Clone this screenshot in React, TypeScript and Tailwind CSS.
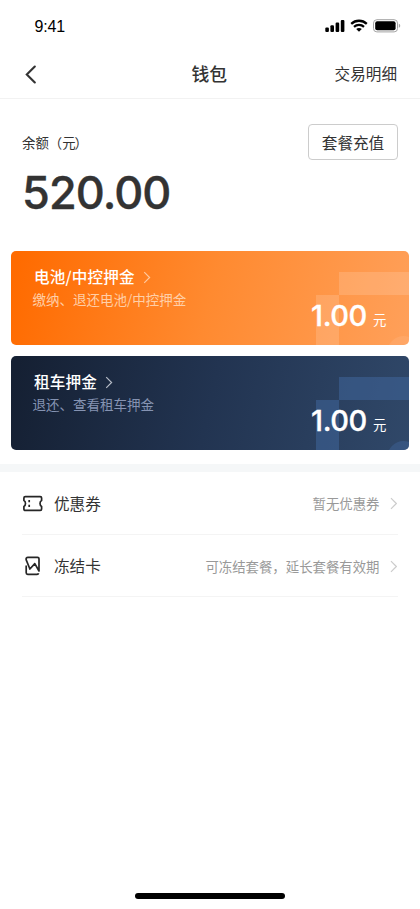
import type { ReactNode } from "react";

function StatusBar() {
  return (
    <div className="flex h-[50px] items-start justify-between pl-[34.5px] pr-[19px]">
      <span className="mt-[16px] font-['Liberation_Sans',Arial,sans-serif] text-[16px] leading-[22px] tracking-[-0.2px] text-black">
        9:41
      </span>
      <div className="mt-[19px] flex items-start">
        <svg className="h-[14px] w-[20px]" viewBox="0 0 20 14" fill="#000">
          <rect x="0.3" y="8.4" width="3.6" height="4.6" rx="1.1" />
          <rect x="5.4" y="6.2" width="3.6" height="6.8" rx="1.1" />
          <rect x="10.6" y="3.6" width="3.6" height="9.4" rx="1.1" />
          <rect x="15.8" y="1" width="3.6" height="12" rx="1.1" />
        </svg>
        <svg className="ml-[5px] h-[14px] w-[18px]" viewBox="0 0 18 14" fill="none" stroke="#000">
          <path d="M1.2 4.8C5.6.7 12.4.7 16.8 4.8" strokeWidth="2.3" />
          <path d="M4 7.9c2.8-2.6 7.2-2.6 10 0" strokeWidth="2.2" />
          <path d="M9 12.7 6.2 10c1.6-1.4 4-1.4 5.6 0Z" fill="#000" stroke="none" />
        </svg>
        <svg className="ml-[5px] h-[14px] w-[28px]" viewBox="0 0 28 14">
          <rect x="0.5" y="0.7" width="24" height="12.2" rx="3.4" fill="#fff" stroke="#a3a3a3" />
          <rect x="2.2" y="2.3" width="20.4" height="9" rx="2" fill="#000" />
          <path d="M25.8 4.8v4c.9-.3 1.4-1.1 1.4-2s-.5-1.7-1.4-2Z" fill="#a3a3a3" />
        </svg>
      </div>
    </div>
  );
}

function Chevron({ className }: { className: string }) {
  return (
    <svg className={className} viewBox="0 0 8 14" fill="none" stroke="currentColor" strokeWidth="1.3">
      <path d="m1 1.2 5.8 5.8L1 12.8" />
    </svg>
  );
}

interface DepositCardProps {
  title: string;
  note: string;
  background: string;
  noteColor: string;
  chevronColor: string;
  patternColor: string;
  circleColor: string;
}

function DepositCard({ title, note, background, noteColor, chevronColor, patternColor, circleColor }: DepositCardProps) {
  return (
    <section className={`relative h-[94px] overflow-hidden rounded-[5px] ${background}`}>
      <svg className="absolute right-0 top-0 h-[94px] w-[93px]" viewBox="0 0 93 94" fill="currentColor">
        <path className={patternColor} d="M23 21h70v23H23zM0 44h23v50H0z" />
        <circle className={circleColor} cx="87.5" cy="101" r="16" />
      </svg>
      <div className="relative flex h-full flex-col pl-[21.5px]">
        <div className="mt-[13px] flex h-[24px] items-center pl-[1.5px] text-white">
          <h2 className="text-[15.6px] font-medium leading-[24px] tracking-[0.15px]">{title}</h2>
          <Chevron className={`ml-[8.5px] mt-[2px] h-[13px] w-[8px] ${chevronColor}`} />
        </div>
        <p className={`text-[13.5px] leading-[22px] ${noteColor}`}>{note}</p>
        <div className="mr-[22.5px] mt-[-12px] flex items-baseline justify-end text-white">
          <span className="font-['Inter',sans-serif] text-[29px] font-medium leading-[36px] tracking-[-0.5px] [-webkit-text-stroke:0.3px]">1.00</span>
          <span className="ml-[6.5px] -translate-y-px text-[13.4px] leading-[20px]">元</span>
        </div>
      </div>
    </section>
  );
}

function ListRow({ icon, label, value }: { icon: ReactNode; label: string; value: string }) {
  return (
    <div className="mx-[22px] h-[62.5px] shrink-0 border-b border-[#f4f4f4] pt-px">
      <div className="flex h-full items-center">
        <span className="flex w-[21px] items-center justify-center">{icon}</span>
        <span className="ml-[11px] text-[15.6px] text-[#333]">{label}</span>
        <span className="ml-auto text-[13.4px] text-[#999]">{value}</span>
        <Chevron className="ml-[10px] mr-px mt-px h-[13px] w-[7.5px] text-[#ccc]" />
      </div>
    </div>
  );
}

function CouponIcon() {
  return (
    <svg className="mt-px h-[17px] w-[20px]" viewBox="0 0 20 17" fill="none" stroke="#262626" strokeWidth="1.7" strokeLinejoin="round">
      <path d="M2.3 1.6h14.9c.9 0 1.4.5 1.4 1.4v2.6c-1 .5-1.6 1.4-1.6 2.9s.6 2.4 1.6 2.9V14c0 .9-.5 1.4-1.4 1.4H2.3C1.4 15.4.9 14.900.9 14v-2.6c1-.5 1.6-1.4 1.6-2.9S1.9 6.100.9 5.600V3c0-.9.5-1.400 1.400-1.400Z" />
      <path d="M6.200 5v2.200M6.200 9.800V12" />
    </svg>
  );
}

function FreezeIcon() {
  return (
    <svg className="mt-px h-[20px] w-[16px]" viewBox="0 0 16 20" fill="none" stroke="#262626" strokeWidth="1.7" strokeLinejoin="round">
      <path d="M14 15 9.800 7.600 4.900 13 1.200 3.900C.8 2.300 1.500 1.300 3 1.300h9.500c1 0 1.500.5 1.500 1.500Z" />
      <path d="M1.200 9.500v7.200c0 1 .5 1.600 1.500 1.600h9.400c.8 0 1.300-.3 1.500-1" />
    </svg>
  );
}

export default function App() {
  return (
    <main className="flex h-[909px] w-[420px] flex-col overflow-hidden bg-white font-['Noto_Sans_CJK_SC',sans-serif] text-[#333]">
      <StatusBar />
      <header className="grid h-[49px] shrink-0 grid-cols-3 items-center border-b border-[#f2f2f2] pl-[24px] pr-[23px]">
        <svg className="h-[19px] w-[12px]" viewBox="0 0 12 19" fill="none" stroke="#333" strokeWidth="2.1" strokeLinecap="round">
          <path d="M10.8 1.5 2.8 9.5l8 8" />
        </svg>
        <h1 className="-mt-[2px] pr-[2.5px] text-center text-[17.8px] font-medium leading-[24px]">钱包</h1>
        <span className="-mt-[2px] text-right text-[15.6px] leading-[24px]">交易明细</span>
      </header>

      <section className="flex h-[152px] shrink-0 items-start justify-between pl-[22px] pr-[22px] pt-[25px]">
        <div>
          <p className="mt-[8px] text-[13.4px] leading-[20px]">
            余额（元<span className="-ml-px">）</span>
          </p>
          <p className="mt-[14px] font-['Inter',sans-serif] text-[45px] font-medium leading-[54px] tracking-[-0.9px] [-webkit-text-stroke:0.4px]">520.00</p>
        </div>
        <button className="h-[36px] w-[90px] rounded-[4px] border border-[#ccc] text-[15.6px] leading-[24px]">套餐充值</button>
      </section>

      <div className="flex shrink-0 flex-col gap-[11px] px-[11px]">
        <DepositCard
          title="电池/中控押金"
          note="缴纳、退还电池/中控押金"
          background="bg-[linear-gradient(103deg,#ff6b00_2%,#ff8a30_50%,#ffa05a_100%)]"
          noteColor="text-[#ffcfa8]"
          chevronColor="text-[#ffc79c]"
          patternColor="text-white/15"
          circleColor="text-white/8"
        />
        <DepositCard
          title="租车押金"
          note="退还、查看租车押金"
          background="bg-[linear-gradient(103deg,#152033_2%,#223451_50%,#304869_100%)]"
          noteColor="text-[#8593b2]"
          chevronColor="text-[#b4bac5]"
          patternColor="text-[#3e6296]/60"
          circleColor="text-[#3e6296]/50"
        />
      </div>

      <div className="mt-[14px] h-[8px] shrink-0 bg-[#f5f7f8]" />
      <ListRow icon={<CouponIcon />} label="优惠券" value="暂无优惠券" />
      <ListRow icon={<FreezeIcon />} label="冻结卡" value="可冻结套餐，延长套餐有效期" />

      <div className="mb-[10px] mt-auto h-[6px] w-[150px] shrink-0 self-center rounded-full bg-black" />
    </main>
  );
}
